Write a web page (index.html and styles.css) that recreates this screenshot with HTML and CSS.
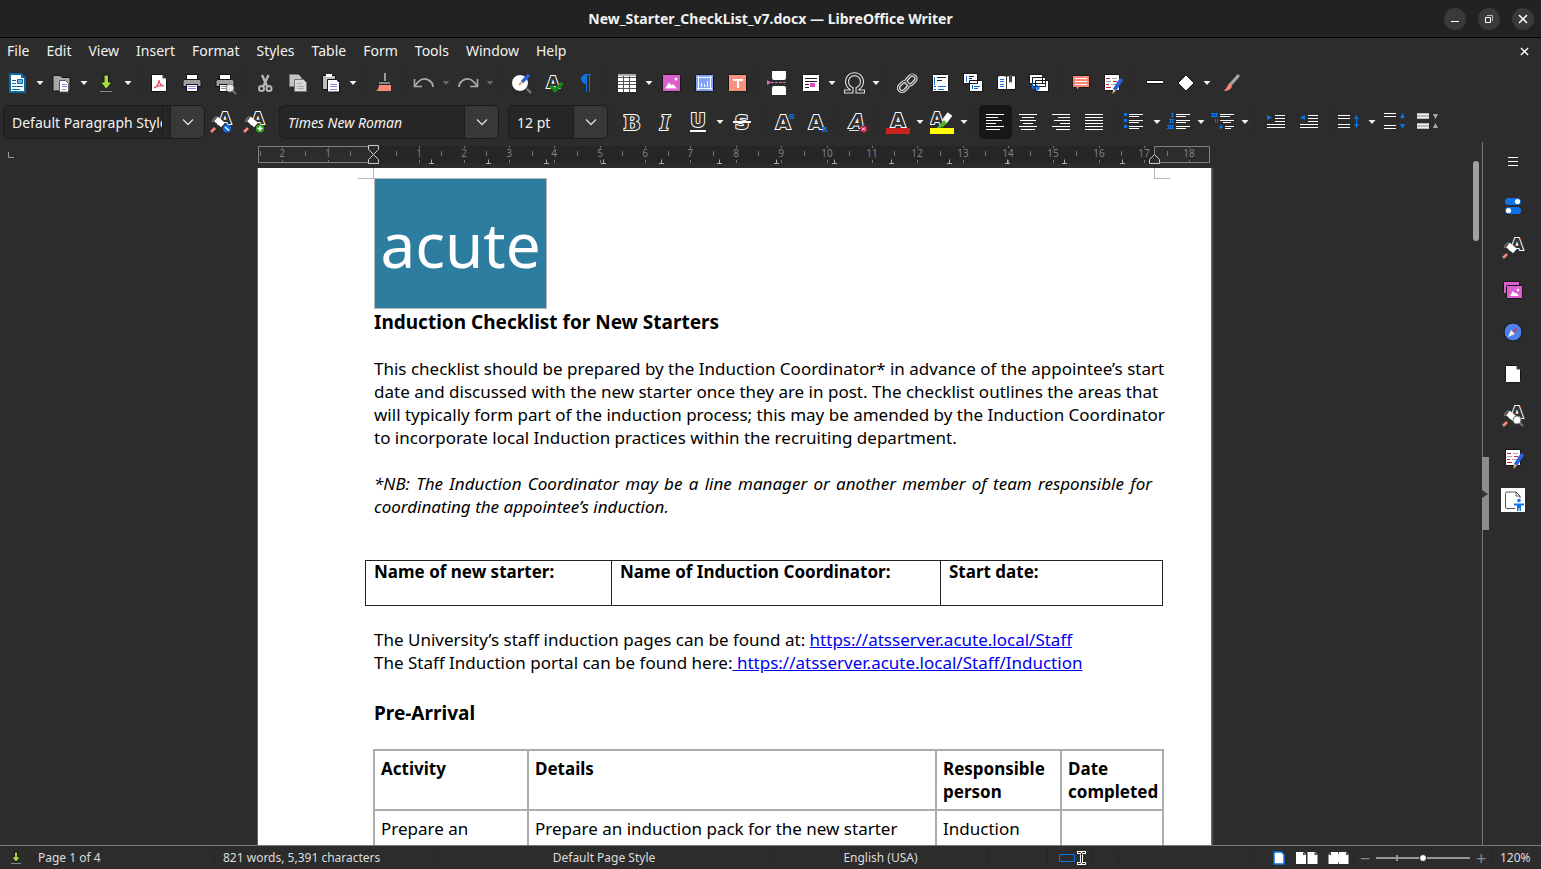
FILE: index.html
```html
<!DOCTYPE html>
<html lang="en">
<head>
<meta charset="utf-8">
<title>New_Starter_CheckList_v7.docx — LibreOffice Writer</title>
<link rel="stylesheet" href="styles.css">
</head>
<body>
<svg class="sprite" aria-hidden="true">
  <symbol id="new" viewBox="0 0 24 24"><path d="M4 3h11l4 4v14H4z" fill="#fff" stroke="#0b69a3" stroke-width="2"/><path d="M15 2v5h5z" fill="#0b69a3"/><path d="M6 9.500h4M6 12.500h4M6 15.500h11M6 18.500h8" stroke="#0b69a3"/><path d="M11.500 8.500h5v4h-5z" fill="#6bb4e8" stroke="#0b69a3"/></symbol>
  <symbol id="open" viewBox="0 0 24 24"><path d="M3 20V5.500q0-1 1-1h6l2 2h7q1 0 1 1V20z" fill="#a8a8a8" stroke="#111"/><path d="M9.500 9.500h6l3 3v8.500h-9z" fill="#fff" stroke="#555"/><path d="M12 13.500h5M12 15.500h5M12 18.500h4" stroke="#8b87e0"/></symbol>
  <symbol id="save" viewBox="0 0 24 24"><path d="M10 4h4.500v7h3.500l-5.800 7.500L6.500 11H10z" fill="#a4dc3c" stroke="#141414"/><path d="M6 20.500h12" stroke="#888"/></symbol>
  <symbol id="pdf" viewBox="0 0 24 24"><path d="M4.500 3.500h11l4 4v13h-15z" fill="#fff" stroke="#111"/><path d="M15.500 3.500v4h4z" fill="#444"/><path d="M7 17c3-1 5-5 5-8 0 3 2 6 5 6-3-1-7 0-10 2z" fill="none" stroke="#e0435a" stroke-width="1.200"/></symbol>
  <symbol id="print" viewBox="0 0 24 24"><path d="M6.500 3.500h11v5h-11z" fill="#fff" stroke="#111"/><path d="M5 8.500h14q2 0 2 2v5H3v-5q0-2 2-2z" fill="#a0a0a0" stroke="#151515"/><path d="M6.500 13.500h11v7h-11z" fill="#fff" stroke="#111"/><path d="M8 15.500h8M8 17.500h8" stroke="#8b87e0"/></symbol>
  <symbol id="preview" viewBox="0 0 24 24"><use href="#print"/><circle cx="17" cy="17" r="4" fill="#e8e8e8" stroke="#777"/><path d="M20 20l3 3" stroke="#777" stroke-width="2"/></symbol>
  <symbol id="cut" viewBox="0 0 24 24"><path d="M9 4l5 11M15.500 4l-5 11" stroke="#b5b5b5" stroke-width="2.400"/><g fill="none" stroke="#b5b5b5" stroke-width="2"><circle cx="8.500" cy="17.500" r="2.500"/><circle cx="16" cy="17.500" r="2.500"/></g></symbol>
  <symbol id="copy" viewBox="0 0 24 24"><path d="M3.500 3.500h9l3 3v9h-12z" fill="#c4c4c4" stroke="#777"/><path d="M8.500 8.500h9l3 3v9h-12z" fill="#d8d8d8" stroke="#777"/><path d="M11 12.500h5M11 15.500h7M11 17.500h7" stroke="#aaa"/></symbol>
  <symbol id="paste" viewBox="0 0 24 24"><path d="M3.500 4.500h13v14h-13z" fill="#bdbdbd" stroke="#151515"/><path d="M7 3h6v3H7z" fill="#fff"/><path d="M8.500 8.500h9l3 3v9.500h-12z" fill="#fff" stroke="#151515"/><path d="M11 13.500h7M11 15.500h7M11 18.500h7" stroke="#8b87e0"/></symbol>
  <symbol id="clone" viewBox="0 0 24 24"><path d="M13 2v8" stroke="#999" stroke-width="2"/><path d="M6.500 10.500h12v3h-12z" fill="#8a8a8a" stroke="#222"/><path d="M7 14h12v6H4q3-2 3-6z" fill="#f98a78"/></symbol>
  <symbol id="undo" viewBox="0 0 24 24"><path d="M2.500 8v7.500H10" fill="none" stroke="#aaa" stroke-width="1.600"/><path d="M3 15q7-11 15-5 3 2 3 6" fill="none" stroke="#aaa" stroke-width="1.800"/></symbol>
  <symbol id="redo" viewBox="0 0 24 24"><path d="M21.500 8v7.500H14" fill="none" stroke="#aaa" stroke-width="1.600"/><path d="M21 15q-7-11-15-5-3 2-3 6" fill="none" stroke="#aaa" stroke-width="1.800"/></symbol>
  <symbol id="find" viewBox="0 0 24 24"><path d="M17 17l5 5" stroke="#777" stroke-width="2.400"/><circle cx="11" cy="12" r="8.500" fill="#fff" stroke="#1a1a1a"/><path d="M20 4l-7 7" stroke="#2a5fe0" stroke-width="3.400"/><path d="M13 11l-3 3" stroke="#efa36b" stroke-width="2"/></symbol>
  <symbol id="spell" viewBox="0 0 24 24"><text x="11" y="17" class="glyph glyph-sm">A</text><path d="M9 15l4 4.500 7.500-7.500" fill="none" stroke="#138a1e" stroke-width="3.400"/></symbol>
  <symbol id="pilcrow" viewBox="0 0 24 24"><path d="M16 3.500h-5a4.500 4.500 0 0 0 0 9h.5V21M14.500 3.500V21" fill="none" stroke="#0b73e6"/><path d="M12 3.500h-1a4.500 4.500 0 0 0 0 9h1z" fill="#0b73e6"/></symbol>
  <symbol id="table" viewBox="0 0 24 24"><path d="M3 3h18v18H3z" fill="#fff"/><path d="M3 3.500h18M3 6.500h18M3 10.500h18M3 13.500h18M3 17.500h18M8.500 3v18M14.500 3v18" stroke="#555"/><path d="M3 3h18v2H3z" fill="#aaa"/></symbol>
  <symbol id="image" viewBox="0 0 24 24"><rect x="3.500" y="3.500" width="18" height="17" rx="1" fill="#dc5fce" stroke="#171717"/><path d="M6 17.500l4-6 2.500 3 1.500-1.500 4 4.500z" fill="#fff"/><circle cx="17" cy="8" r="1.500" fill="#fff"/></symbol>
  <symbol id="chart" viewBox="0 0 24 24"><rect x="3.500" y="3.500" width="18" height="17" rx="1" fill="#82a3fa" stroke="#171717"/><path d="M6.500 5v14M5 17.500h15M18.500 5v14M5 6.500h15M9.500 16v-4M12.500 16v-3M15.500 16v-6" stroke="#fff"/></symbol>
  <symbol id="textbox" viewBox="0 0 24 24"><rect x="3.500" y="3.500" width="18" height="17" rx="1" fill="#fb917e" stroke="#171717"/><path d="M8 9h10M13 9v8" stroke="#fff" stroke-width="2"/></symbol>
  <symbol id="pagebreak" viewBox="0 0 24 24"><path d="M7 0h14v7q0 2-2 2H9q-2 0-2-2zM7 24h14v-7q0-2-2-2H9q-2 0-2 2z" fill="#fff"/><path d="M6 11.500h16" stroke="#e066c8" stroke-dasharray="3 1"/><path d="M2 9l4 2.500L2 14z" fill="#e066c8"/></symbol>
  <symbol id="field" viewBox="0 0 24 24"><rect x="4.500" y="3.500" width="17" height="17" rx="1" fill="#fff" stroke="#171717"/><path d="M7 7.500h12M7 10.500h12M7 13.500h4M7 16.500h4" stroke="#222"/><path d="M12 12h5v4h-5z" fill="#d84bc5"/></symbol>
  <symbol id="omega" viewBox="0 0 24 24"><path d="M2 20.500h7.500v-3a7.500 7.500 0 1 1 6 0v3H23" fill="none" stroke="#ddd" stroke-width="4"/><path d="M3 20.500h6.500v-3a7.500 7.500 0 1 1 6 0v3H22" fill="none" stroke="#2c2c2c" stroke-width="1.800"/></symbol>
  <symbol id="link" viewBox="0 0 24 24"><g fill="none" stroke="#ddd" stroke-width="3.400"><rect x="10.500" y="5.500" width="11" height="7" rx="3.500" transform="rotate(-45 16 9)"/><rect x="3" y="12" width="11" height="7" rx="3.500" transform="rotate(-45 8.500 15.500)"/></g><g fill="none" stroke="#444" stroke-width="1"><rect x="10.500" y="5.500" width="11" height="7" rx="3.500" transform="rotate(-45 16 9)"/><rect x="3" y="12" width="11" height="7" rx="3.500" transform="rotate(-45 8.500 15.500)"/></g></symbol>
  <symbol id="footnote" viewBox="0 0 24 24"><rect x="4.500" y="3.500" width="16" height="17" rx="1" fill="#fff" stroke="#171717"/><path d="M9 6.500h9M9 9.500h5" stroke="#222"/><path d="M6.500 6v8M6 15.500h2M10 15.500h8M6 18.500h2M10 18.500h6" stroke="#0b6fe0"/></symbol>
  <symbol id="endnote" viewBox="0 0 24 24"><path d="M2.500 2.500h14v10h-14zM8.500 9.500h13v11h-13z" fill="#fff" stroke="#171717"/><path d="M8 5.500h5M8 7.500h3" stroke="#222"/><path d="M5.500 5v6M11.500 14v4M13 15.500h6M13 17.500h4" stroke="#0b6fe0"/></symbol>
  <symbol id="bookmark" viewBox="0 0 24 24"><path d="M3.500 5q4-1 9 0 5-1 9 0v13.500h-18z" fill="#fff" stroke="#171717"/><path d="M12.500 5v14" stroke="#333"/><path d="M6 8.500h4M6 10.500h4M6 13.500h4M6 15.500h4" stroke="#0b6fe0"/><path d="M15 4h3v8l-1.500-1.500L15 12z" fill="#444"/></symbol>
  <symbol id="crossref" viewBox="0 0 24 24"><path d="M2.500 3.500h13v9h-13zM5.500 6.500h13v9h-13zM8.500 9.500h13v11h-13z" fill="#fff" stroke="#171717"/><path d="M12 12.500h7M12 15.500h5" stroke="#222"/><path d="M5.500 12v5h6M9 14l3 3-3 3" fill="none" stroke="#0b6fe0" stroke-width="1.500"/></symbol>
  <symbol id="comment" viewBox="0 0 24 24"><path d="M5.500 4.500h17v12H12l-2.500 4v-4h-4z" fill="#fb8672" stroke="#1b1b1b"/><path d="M8 7.500h12M8 10.500h12M8 13.500h12" stroke="#fff"/></symbol>
  <symbol id="track" viewBox="0 0 24 24"><path d="M4.500 3.500h15v16h-15z" fill="#fff" stroke="#171717"/><path d="M6 7.500h4M13 10.500h4M6 13.500h3M6 16.500h5" stroke="#c62036"/><path d="M12 7.500h5M6 10.500h5M11 13.500h6" stroke="#aaa"/><path d="M21.500 8l-7 11" stroke="#2a62e0" stroke-width="4"/><path d="M16 19.500l-3.500 3.500.5-5z" fill="#efb07a"/></symbol>
  <symbol id="line" viewBox="0 0 24 24"><path d="M6 11h17" stroke="#111" stroke-width="4"/><path d="M7 11h16" stroke="#fff" stroke-width="2"/></symbol>
  <symbol id="shape" viewBox="0 0 24 24"><path d="M13 4l8 8-8 8-8-8z" fill="#fff" stroke="#151515"/></symbol>
  <symbol id="draw" viewBox="0 0 24 24"><path d="M21 5l-7 8" stroke="#a5a5a5" stroke-width="3.400" stroke-linecap="round"/><path d="M12 12l3 3q-1 5-8.500 5 3-2 5.500-8z" fill="#fb8672"/></symbol>
  <symbol id="style" viewBox="0 0 24 24"><text x="16" y="14" class="glyph glyph-sm">A</text><path d="M3.500 12q1-5 5-5" fill="none" stroke="#777" stroke-width="1.500"/><path d="M7 9l7 6" stroke="#fff" stroke-width="6"/><path d="M6 18l-4 4" stroke="#f58a78" stroke-width="2.600"/></symbol>
  <symbol id="style-update" viewBox="0 0 24 24"><use href="#style"/><circle cx="18" cy="18.500" r="4" fill="#0b6fe0"/><path d="M16 17l4 3.500" stroke="#fff" stroke-width="1.500"/></symbol>
  <symbol id="style-new" viewBox="0 0 24 24"><use href="#style"/><circle cx="18" cy="18.500" r="4" fill="#36a420"/><path d="M15.500 18.500h5M18 16v5" stroke="#fff" stroke-width="1.300"/></symbol>
  <symbol id="style-find" viewBox="0 0 24 24"><use href="#style"/><path d="M18 18l4 4" stroke="#777" stroke-width="2"/><circle cx="16" cy="16" r="4" fill="#fff" stroke="#777"/></symbol>
  <symbol id="bold" viewBox="0 0 24 24"><text x="12" y="20" class="glyph glyph-serif">B</text></symbol>
  <symbol id="italic" viewBox="0 0 24 24"><text x="12" y="20" class="glyph glyph-serif slant">I</text></symbol>
  <symbol id="underline" viewBox="0 0 24 24"><text x="12" y="17" class="glyph glyph-mid">U</text><path d="M4 21h16" stroke="#fff" stroke-width="2"/></symbol>
  <symbol id="strike" viewBox="0 0 24 24"><text x="12" y="19" class="glyph">S</text><path d="M3 12h18" stroke="#fff" stroke-width="2"/></symbol>
  <symbol id="super" viewBox="0 0 24 24"><text x="12" y="19" class="glyph glyph-mid">A</text><text x="21" y="9" class="mark">B</text></symbol>
  <symbol id="sub" viewBox="0 0 24 24"><text x="12" y="19" class="glyph glyph-mid">A</text><text x="21" y="22" class="mark">B</text></symbol>
  <symbol id="clear" viewBox="0 0 24 24"><text x="12" y="18" class="glyph glyph-mid slant">A</text><path d="M4 20.500h10" stroke="#ddd"/><circle cx="18.500" cy="19" r="3.500" fill="#cf2440"/><path d="M17 17.500l3 3M20 17.500l-3 3" stroke="#fff"/></symbol>
  <symbol id="color" viewBox="0 0 24 24"><text x="12" y="17" class="glyph glyph-mid">A</text><path d="M0 18h24v6H0z" fill="#c9211e"/></symbol>
  <symbol id="highlight" viewBox="0 0 24 24"><text x="7" y="14" class="glyph glyph-sm">A</text><path d="M20 4l-6 8" stroke="#fff" stroke-width="6"/><path d="M14 10l3 3-4 4-7 2z" fill="#55b52c"/><path d="M0 18h24v6H0z" fill="#ff0"/></symbol>
  <symbol id="left" viewBox="0 0 24 24"><path d="M3 4.500h18M3 7.500h12M3 10.500h16M3 13.500h10M3 16.500h18M3 19.500h14" stroke="#fff"/></symbol>
  <symbol id="center" viewBox="0 0 24 24"><path d="M3 4.500h18M6 7.500h12M4 10.500h16M7 13.500h10M3 16.500h18M5 19.500h14" stroke="#fff"/></symbol>
  <symbol id="right" viewBox="0 0 24 24"><path d="M3 4.500h18M9 7.500h12M5 10.500h16M11 13.500h10M3 16.500h18M7 19.500h14" stroke="#fff"/></symbol>
  <symbol id="justify" viewBox="0 0 24 24"><path d="M3 4.500h18M3 7.500h18M3 10.500h18M3 13.500h18M3 16.500h18M3 19.500h18" stroke="#fff"/></symbol>
  <symbol id="bullets" viewBox="0 0 24 24"><path d="M6 4.500h14M6 6.500h10M6 10.500h14M6 12.500h10M6 16.500h14M6 18.500h10" stroke="#fff"/><path d="M1 3h3v3H1zM1 9h3v3H1zM1 15h3v3H1z" fill="#0b73e6"/></symbol>
  <symbol id="numbers" viewBox="0 0 24 24"><path d="M9 4.500h14M9 6.500h10M9 10.500h14M9 12.500h10M9 16.500h14M9 18.500h10" stroke="#fff"/><path d="M4 3.500h3M4 6.500h3M5.500 3v4M2 9.500h5M2 12.500h5M3.500 9v4M5.500 9v4M0 15.500h7M0 18.500h7M1.500 15v4M3.500 15v4M5.500 15v4" stroke="#0b73e6"/></symbol>
  <symbol id="outline" viewBox="0 0 24 24"><path d="M9 4.500h14M9 6.500h10M9 10.500h14M12 12.500h8M14 16.500h9M14 18.500h6" stroke="#fff"/><path d="M0 3.500h7M0 6.500h7M1.500 3v4M3.500 3v4M5.500 3v4M4.500 9v3.500M6.500 9v3.500" stroke="#0b73e6"/><circle cx="10" cy="17" r="1.700" fill="#0b73e6"/></symbol>
  <symbol id="indent" viewBox="0 0 24 24"><path d="M11 5.500h10M11 8.500h10M11 11.500h10M3 14.500h18M3 17.500h18" stroke="#fff"/><path d="M3 5v5l5-2.500z" fill="#0b73e6"/></symbol>
  <symbol id="outdent" viewBox="0 0 24 24"><path d="M11 5.500h10M11 8.500h10M11 11.500h10M3 14.500h18M3 17.500h18" stroke="#fff"/><path d="M8 5v5L3 7.500z" fill="#0b73e6"/></symbol>
  <symbol id="spacing" viewBox="0 0 24 24"><path d="M0 5.500h12M0 8.500h12M0 14.500h12M0 17.500h12" stroke="#fff"/><path d="M18.500 7v9" stroke="#0b73e6"/><path d="M16 9l2.500-4L21 9zM16 14l2.500 4 2.500-4z" fill="#0b73e6"/></symbol>
  <symbol id="para-inc" viewBox="0 0 24 24"><path d="M2 3.500h12M2 6.500h12M2 15.500h12M2 18.500h12" stroke="#fff"/><path d="M18 8l2.500-5L23 8zM18 14l2.500 5 2.500-5z" fill="#0b73e6"/></symbol>
  <symbol id="para-dec" viewBox="0 0 24 24"><path d="M2 3h12v6H2zM2 13h12v6H2z" fill="#bbb"/><path d="M2 4.500h12M2 7.500h12M2 14.500h12M2 17.500h12" stroke="#eee"/><path d="M18 4h5l-2.500 5zM18 18h5l-2.500-5z" fill="#aaa"/></symbol>
  <symbol id="drop" viewBox="0 0 10 6"><path d="M1.500 1h7L5 5z" fill="currentColor"/></symbol>
  <symbol id="chev" viewBox="0 0 12 8"><path d="M1 1.500l5 5 5-5" fill="none" stroke="#ddd" stroke-width="1.300"/></symbol>
  <symbol id="burger" viewBox="0 0 24 24"><path d="M7 7.500h10M7 11.500h10M7 15.500h10" stroke="#fff"/></symbol>
  <symbol id="props" viewBox="0 0 24 24"><rect x="4" y="4" width="16" height="7" rx="3.500" fill="#0b73e6"/><rect x="4" y="13" width="16" height="7" rx="3.500" fill="#0b73e6"/><circle cx="16.500" cy="7.500" r="2.600" fill="#fff"/><circle cx="7.500" cy="16.500" r="2.600" fill="#fff"/></symbol>
  <symbol id="gallery" viewBox="0 0 24 24"><rect x="2.500" y="3.500" width="16" height="12" rx="1" fill="#dc5fce" stroke="#171717"/><rect x="5.500" y="7.500" width="16" height="13" rx="1" fill="#dc5fce" stroke="#171717"/><path d="M9 18l3-5 2 2.500 1-1 3 3.500z" fill="#fff"/><circle cx="17" cy="12" r="1.200" fill="#fff"/></symbol>
  <symbol id="navigator" viewBox="0 0 24 24"><circle cx="12" cy="12" r="9" fill="#4f80ea" stroke="#151515"/><path d="M17 7l-3.500 6-2-2z" fill="#d43b4b"/><path d="M7 17l3-7 4 4z" fill="#eee"/></symbol>
  <symbol id="page" viewBox="0 0 24 24"><path d="M5 3.500h10.500l4 4v12q0 1-1 1h-13q-1 0-1-1v-15z" fill="#fff" stroke="#161616"/><path d="M15.500 3.500v4h4z" fill="#444"/></symbol>
  <symbol id="a11y" viewBox="0 0 24 24"><path d="M14 20.500H6q-1.500 0-1.500-1.500V5.500Q4.500 4 6 4h9l4 4v2M15 4v4h4" fill="none" stroke="#555"/><circle cx="18" cy="12.500" r="1.800" fill="#0b78e6"/><path d="M13 15.500h10v2h-3v5.500h-1.500v-3h-1v3H16v-5.500h-3z" fill="#0b78e6"/></symbol>
</svg>

<header class="titlebar">
  <h1 class="window-title">New_Starter_CheckList_v7.docx — LibreOffice Writer</h1>
  <div class="window-controls">
    <button class="win-btn" aria-label="Minimize"><svg viewBox="0 0 22 22"><path d="M7 13.500h8" stroke="#fff"/></svg></button>
    <button class="win-btn" aria-label="Restore"><svg viewBox="0 0 22 22"><path d="M7.500 9.500h5v5h-5z" fill="none" stroke="#fff"/><path d="M9 7.500h5.500V13" fill="none" stroke="#bbb"/></svg></button>
    <button class="win-btn" aria-label="Close"><svg viewBox="0 0 22 22"><path d="M7 7l8 8M15 7l-8 8" stroke="#fff" stroke-width="1.500"/></svg></button>
  </div>
</header>

<nav class="menubar" aria-label="Menu">
  <button>File</button><button>Edit</button><button>View</button><button>Insert</button><button>Format</button><button>Styles</button><button>Table</button><button>Form</button><button>Tools</button><button>Window</button><button>Help</button>
  <button class="close-doc" aria-label="Close document"><svg viewBox="0 0 10 10"><path d="M1 1l8 8M9 1L1 9" stroke="#fff" stroke-width="1.500"/></svg></button>
</nav>

<div class="toolbar standard" role="toolbar" aria-label="Standard">
  <button class="tool" aria-label="New"><svg><use href="#new"/></svg></button><button class="drop" aria-label="New options"><svg><use href="#drop"/></svg></button>
  <button class="tool" aria-label="Open"><svg><use href="#open"/></svg></button><button class="drop" aria-label="Open options"><svg><use href="#drop"/></svg></button>
  <button class="tool" aria-label="Save"><svg><use href="#save"/></svg></button><button class="drop" aria-label="Save options"><svg><use href="#drop"/></svg></button>
  <span class="sep"></span>
  <button class="tool" aria-label="Export as PDF"><svg><use href="#pdf"/></svg></button>
  <button class="tool" aria-label="Print"><svg><use href="#print"/></svg></button>
  <button class="tool" aria-label="Print preview"><svg><use href="#preview"/></svg></button>
  <span class="sep"></span>
  <button class="tool" aria-label="Cut"><svg><use href="#cut"/></svg></button>
  <button class="tool" aria-label="Copy"><svg><use href="#copy"/></svg></button>
  <button class="tool" aria-label="Paste"><svg><use href="#paste"/></svg></button><button class="drop" aria-label="Paste options"><svg><use href="#drop"/></svg></button>
  <span class="sep"></span>
  <button class="tool" aria-label="Clone formatting"><svg><use href="#clone"/></svg></button>
  <span class="sep"></span>
  <button class="tool" aria-label="Undo"><svg><use href="#undo"/></svg></button><button class="drop dim" aria-label="Undo list"><svg><use href="#drop"/></svg></button>
  <button class="tool" aria-label="Redo"><svg><use href="#redo"/></svg></button><button class="drop dim" aria-label="Redo list"><svg><use href="#drop"/></svg></button>
  <span class="sep"></span>
  <button class="tool" aria-label="Find and replace"><svg><use href="#find"/></svg></button>
  <button class="tool" aria-label="Spelling"><svg><use href="#spell"/></svg></button>
  <button class="tool" aria-label="Formatting marks"><svg><use href="#pilcrow"/></svg></button>
  <span class="sep"></span>
  <button class="tool" aria-label="Insert table"><svg><use href="#table"/></svg></button><button class="drop" aria-label="Table options"><svg><use href="#drop"/></svg></button>
  <button class="tool" aria-label="Insert image"><svg><use href="#image"/></svg></button>
  <button class="tool" aria-label="Insert chart"><svg><use href="#chart"/></svg></button>
  <button class="tool" aria-label="Insert text box"><svg><use href="#textbox"/></svg></button>
  <span class="sep"></span>
  <button class="tool" aria-label="Insert page break"><svg><use href="#pagebreak"/></svg></button>
  <button class="tool" aria-label="Insert field"><svg><use href="#field"/></svg></button><button class="drop" aria-label="Field options"><svg><use href="#drop"/></svg></button>
  <button class="tool" aria-label="Special character"><svg><use href="#omega"/></svg></button><button class="drop" aria-label="Character options"><svg><use href="#drop"/></svg></button>
  <span class="sep"></span>
  <button class="tool" aria-label="Insert hyperlink"><svg><use href="#link"/></svg></button>
  <button class="tool" aria-label="Insert footnote"><svg><use href="#footnote"/></svg></button>
  <button class="tool" aria-label="Insert endnote"><svg><use href="#endnote"/></svg></button>
  <button class="tool" aria-label="Insert bookmark"><svg><use href="#bookmark"/></svg></button>
  <button class="tool" aria-label="Insert cross-reference"><svg><use href="#crossref"/></svg></button>
  <span class="sep"></span>
  <button class="tool" aria-label="Insert comment"><svg><use href="#comment"/></svg></button>
  <button class="tool" aria-label="Track changes"><svg><use href="#track"/></svg></button>
  <span class="sep"></span>
  <button class="tool" aria-label="Insert line"><svg><use href="#line"/></svg></button>
  <button class="tool" aria-label="Basic shapes"><svg><use href="#shape"/></svg></button><button class="drop" aria-label="Shape options"><svg><use href="#drop"/></svg></button>
  <button class="tool" aria-label="Draw functions"><svg><use href="#draw"/></svg></button>
</div>

<div class="toolbar formatting" role="toolbar" aria-label="Formatting">
  <div class="combo combo-wide"><input aria-label="Paragraph style" value="Default Paragraph Style"><span class="combo-rule"></span><button aria-label="Show styles"><svg><use href="#chev"/></svg></button></div>
  <button class="tool" aria-label="Update style"><svg><use href="#style-update"/></svg></button>
  <button class="tool" aria-label="New style"><svg><use href="#style-new"/></svg></button>
  <span class="sep"></span>
  <div class="combo combo-font"><input class="slant" aria-label="Font name" value="Times New Roman"><button aria-label="Show fonts"><svg><use href="#chev"/></svg></button></div>
  <div class="combo combo-size"><input aria-label="Font size" value="12 pt"><button aria-label="Show sizes"><svg><use href="#chev"/></svg></button></div>
  <span class="sep"></span>
  <button class="tool" aria-label="Bold"><svg><use href="#bold"/></svg></button>
  <button class="tool" aria-label="Italic"><svg><use href="#italic"/></svg></button>
  <button class="tool" aria-label="Underline"><svg><use href="#underline"/></svg></button><button class="drop" aria-label="Underline options"><svg><use href="#drop"/></svg></button>
  <button class="tool" aria-label="Strikethrough"><svg><use href="#strike"/></svg></button>
  <span class="sep"></span>
  <button class="tool" aria-label="Superscript"><svg><use href="#super"/></svg></button>
  <button class="tool" aria-label="Subscript"><svg><use href="#sub"/></svg></button>
  <span class="sep"></span>
  <button class="tool" aria-label="Clear formatting"><svg><use href="#clear"/></svg></button>
  <span class="sep"></span>
  <button class="tool" aria-label="Font color"><svg><use href="#color"/></svg></button><button class="drop" aria-label="Font color options"><svg><use href="#drop"/></svg></button>
  <button class="tool" aria-label="Highlighting"><svg><use href="#highlight"/></svg></button><button class="drop" aria-label="Highlighting options"><svg><use href="#drop"/></svg></button>
  <span class="sep"></span>
  <button class="tool active" aria-label="Align left" aria-pressed="true"><svg><use href="#left"/></svg></button>
  <button class="tool" aria-label="Align center"><svg><use href="#center"/></svg></button>
  <button class="tool" aria-label="Align right"><svg><use href="#right"/></svg></button>
  <button class="tool" aria-label="Justify"><svg><use href="#justify"/></svg></button>
  <span class="sep"></span>
  <button class="tool" aria-label="Bullets"><svg><use href="#bullets"/></svg></button><button class="drop" aria-label="Bullet options"><svg><use href="#drop"/></svg></button>
  <button class="tool" aria-label="Numbering"><svg><use href="#numbers"/></svg></button><button class="drop" aria-label="Numbering options"><svg><use href="#drop"/></svg></button>
  <button class="tool" aria-label="Outline format"><svg><use href="#outline"/></svg></button><button class="drop" aria-label="Outline options"><svg><use href="#drop"/></svg></button>
  <span class="sep"></span>
  <button class="tool" aria-label="Increase indent"><svg><use href="#indent"/></svg></button>
  <button class="tool" aria-label="Decrease indent"><svg><use href="#outdent"/></svg></button>
  <span class="sep"></span>
  <button class="tool" aria-label="Line spacing"><svg><use href="#spacing"/></svg></button><button class="drop" aria-label="Line spacing options"><svg><use href="#drop"/></svg></button>
  <button class="tool" aria-label="Increase paragraph spacing"><svg><use href="#para-inc"/></svg></button>
  <button class="tool" aria-label="Decrease paragraph spacing"><svg><use href="#para-dec"/></svg></button>
</div>

<main class="workspace">
  <div class="editor">
    <div class="ruler-row">
      <svg class="tab-type" viewBox="0 0 8 8"><path d="M1.500 1v5.500H7" fill="none" stroke="#999"/></svg>
      <svg class="ruler" width="953" height="26" viewBox="0 0 953 26" role="img" aria-label="Horizontal ruler">
        <path d="M115 4h781v17H115z" fill="#262626"/>
        <path d="M115.500 4.500H.5v16h115M896.500 4.500h55v16h-55z" fill="none" stroke="#808080"/>
        <path d="M24.500 4v2m0 12v3M70.500 4v2m0 12v3M161.500 4v2m0 12v3M206.500 4v2m0 12v3M251.500 4v2m0 12v3M296.500 4v2m0 12v3M342.500 4v2m0 12v3M387.500 4v2m0 12v3M432.500 4v2m0 12v3M478.500 4v2m0 12v3M523.500 4v2m0 12v3M569.500 4v2m0 12v3M614.500 4v2m0 12v3M659.500 4v2m0 12v3M705.500 4v2m0 12v3M750.500 4v2m0 12v3M795.500 4v2m0 12v3M841.500 4v2m0 12v3M886.500 4v2m0 12v3M931.500 4v2m0 12v3" stroke="#777"/>
        <path d="M2.500 9v5M47.500 9v5M92.500 9v5M138.500 9v5M183.500 9v5M228.500 9v5M274.500 9v5M319.500 9v5M364.500 9v5M410.500 9v5M455.500 9v5M500.500 9v5M546.500 9v5M591.500 9v5M636.500 9v5M682.500 9v5M727.500 9v5M772.500 9v5M818.500 9v5M863.500 9v5M909.500 9v5" stroke="#777"/>
        <path d="M171 21.500h5m-2.500-4v4M228 21.500h5m-2.500-4v4M286 21.500h5m-2.500-4v4M343 21.500h5m-2.500-4v4M401 21.500h5m-2.500-4v4M459 21.500h5m-2.500-4v4M516 21.500h5m-2.500-4v4M574 21.500h5m-2.500-4v4M631 21.500h5m-2.500-4v4M689 21.500h5m-2.500-4v4M747 21.500h5m-2.500-4v4M804 21.500h5m-2.500-4v4M862 21.500h5m-2.500-4v4" stroke="#aaa" fill="none"/>
        <g class="ruler-num"><text x="24" y="15">2</text><text x="70" y="15">1</text><text x="161" y="15">1</text><text x="206" y="15">2</text><text x="251" y="15">3</text><text x="296" y="15">4</text><text x="342" y="15">5</text><text x="387" y="15">6</text><text x="432" y="15">7</text><text x="478" y="15">8</text><text x="523" y="15">9</text><text x="569" y="15">10</text><text x="614" y="15">11</text><text x="659" y="15">12</text><text x="705" y="15">13</text><text x="750" y="15">14</text><text x="795" y="15">15</text><text x="841" y="15">16</text><text x="886" y="15">17</text><text x="931" y="15">18</text></g>
        <path d="M110.500 3.500h10v4l-5 5-5-5zM115.500 12.500l5 5v4h-10v-4zM896.500 12.500l5 5v4h-10v-4z" fill="#2b2b2b" stroke="#ccc"/>
      </svg>
    </div>
    <div class="viewport">
      <article class="page">
        <span class="crop crop-left"></span><span class="crop crop-right"></span>
        <div class="logo">acute</div>
        <h2 class="doc-heading">Induction Checklist for New Starters</h2>
        <p class="intro">This checklist should be prepared by the Induction Coordinator* in advance of the appointee’s start date and discussed with the new starter once they are in post. The checklist outlines the areas that will typically form part of the induction process; this may be amended by the Induction Coordinator to incorporate local Induction practices within the recruiting department.</p>
        <p class="note">*NB: The Induction Coordinator may be a line manager or another member of team responsible for coordinating the appointee’s induction.</p>
        <table class="names">
          <colgroup><col class="c-starter"><col class="c-coord"><col></colgroup>
          <tr><th>Name of new starter:</th><th>Name of Induction Coordinator:</th><th>Start date:</th></tr>
        </table>
        <p class="links">The University’s staff induction pages can be found at: <a href="https://atsserver.acute.local/Staff">https://atsserver.acute.local/Staff</a><br>The Staff Induction portal can be found here:<a href="https://atsserver.acute.local/Staff/Induction"> https://atsserver.acute.local/Staff/Induction</a></p>
        <h2 class="doc-heading section">Pre-Arrival</h2>
        <table class="tasks">
          <colgroup><col class="c-activity"><col><col class="c-person"><col class="c-date"></colgroup>
          <thead><tr><th>Activity</th><th>Details</th><th>Responsible person</th><th>Date completed</th></tr></thead>
          <tbody><tr><td>Prepare an</td><td>Prepare an induction pack for the new starter</td><td>Induction</td><td></td></tr></tbody>
        </table>
      </article>
    </div>
  </div>
  <div class="scrollbar"><div class="thumb"></div></div>
  <aside class="sidebar" aria-label="Sidebar">
    <button class="side" aria-label="Sidebar settings"><svg><use href="#burger"/></svg></button>
    <button class="side" aria-label="Properties"><svg><use href="#props"/></svg></button>
    <button class="side" aria-label="Styles"><svg><use href="#style"/></svg></button>
    <button class="side" aria-label="Gallery"><svg><use href="#gallery"/></svg></button>
    <button class="side" aria-label="Navigator"><svg><use href="#navigator"/></svg></button>
    <button class="side" aria-label="Page"><svg><use href="#page"/></svg></button>
    <button class="side" aria-label="Style inspector"><svg><use href="#style-find"/></svg></button>
    <button class="side" aria-label="Manage changes"><svg><use href="#track"/></svg></button>
    <button class="side lit" aria-label="Accessibility check"><svg><use href="#a11y"/></svg></button>
    <button class="grip" aria-label="Hide sidebar"><svg viewBox="0 0 6 8"><path d="M0 0v8l6-4z" fill="#333"/></svg></button>
  </aside>
</main>

<footer class="statusbar">
  <div class="cell s-save"><svg class="ico" viewBox="0 0 12 14"><path d="M4.500 1h3v5h3L6 11 1.500 6h3z" fill="#a4dc3c" stroke="#141414"/><path d="M1 12.500h10" stroke="#888"/></svg></div>
  <div class="cell s-page">Page 1 of 4</div>
  <div class="cell s-words">821 words, 5,391 characters</div>
  <div class="cell s-style">Default Page Style</div>
  <div class="cell s-lang">English (USA)</div>
  <div class="cell s-gap"></div>
  <div class="cell s-mode"><svg viewBox="0 0 28 16"><path d="M.5 4.500h15v7H.5z" fill="none" stroke="#0b73e6"/><path d="M18 2.500h3.500l1 1 1-1H27M22.500 3v10M18 13.500h3.500l1-1 1 1H27" fill="none" stroke="#fff" stroke-width="3"/><path d="M19 2.500h2.500l1 1 1-1H26M22.500 3v10M19 13.500h2.500l1-1 1 1H26" fill="none" stroke="#222"/></svg></div>
  <div class="cell s-sel"></div>
  <div class="cell s-sign"></div>
  <div class="cell s-views">
    <button aria-label="Single-page view"><svg width="12" height="14" viewBox="0 0 12 14"><path d="M1 1h7.500L11 3.500V13H1z" fill="#fff" stroke="#0b73e6" stroke-width="1.500"/></svg></button>
    <button aria-label="Multiple-page view"><svg width="23" height="14" viewBox="0 0 23 14"><path d="M1 1h7.500L11 3.500V13H1zM12.500 1H20l2.500 2.500V13h-10z" fill="#fff"/><path d="M8 1v3h3zM19.500 1v3h3z" fill="#444"/></svg></button>
    <button aria-label="Book view"><svg width="21" height="14" viewBox="0 0 21 14"><path d="M.5 3.500L3 1h15l2.500 2.500V13H.5z" fill="#fff"/><path d="M10.500 1v2M10.500 11v2" stroke="#777"/><path d="M3 1v3H0zM18 1v3h3z" fill="#444"/></svg></button>
  </div>
  <div class="cell s-zoom"><button aria-label="Zoom out">−</button><input type="range" min="0" max="100" value="50" aria-label="Zoom"><button aria-label="Zoom in">+</button></div>
  <div class="cell s-pct">120%</div>
</footer>
</body>
</html>
```

FILE: styles.css
```css
* { box-sizing: border-box; }

body {
  margin: 0;
  height: 100vh;
  display: flex;
  flex-direction: column;
  overflow: hidden;
  background: #2c2c2c;
  color: #f2f2f2;
  font: 14px/20px "Noto Sans", "Open Sans", sans-serif;
}

button {
  padding: 0;
  border: 0;
  background: none;
  color: inherit;
  font: inherit;
}

svg { display: block; }
.sprite { display: none; }

/* Outlined letters in toolbar icons */
.glyph {
  font: bold 20px "DejaVu Sans", sans-serif;
  text-anchor: middle;
  fill: #333;
  stroke: #fff;
  stroke-width: 2px;
  paint-order: stroke;
}
.glyph-mid { font-size: 19px; }
.glyph-sm { font-size: 16px; }
.glyph-serif { font-family: "DejaVu Serif", serif; }
.slant { font-style: italic; }
.mark {
  font: bold 8px "Liberation Sans", sans-serif;
  text-anchor: middle;
  fill: #0b73e6;
}

/* Title bar */
.titlebar {
  flex: none;
  height: 38px;
  display: grid;
  grid-template-columns: 1fr auto 1fr;
  align-items: center;
  background: #222;
  border-bottom: 1px solid #000;
}
.window-title {
  grid-column: 2;
  margin: 0;
  font-size: 14px;
  line-height: 20px;
  font-weight: 700;
}
.window-controls {
  display: flex;
  justify-content: flex-end;
  gap: 12px;
  padding-right: 7px;
}
.win-btn {
  width: 22px;
  height: 22px;
  border-radius: 50%;
  background: #3a3a3a;
}

/* Menu bar */
.menubar {
  flex: none;
  height: 26px;
  display: flex;
  align-items: center;
  gap: 17px;
  padding: 0 12px 0 7px;
}
.close-doc { margin-left: auto; }
.close-doc svg { width: 9px; height: 9px; }

/* Toolbars */
.toolbar {
  flex: none;
  display: flex;
  align-items: center;
  padding-left: 2px;
}
.standard { height: 38px; }
.formatting { height: 40px; padding-left: 3px; }
.tool {
  flex: none;
  width: 33px;
  height: 34px;
  display: grid;
  align-items: center;
  justify-items: start;
  padding-left: 4px;
  border-radius: 5px;
}
.tool svg, .side svg { width: 24px; height: 24px; }
.tool.active { background: #171717; }
.drop {
  flex: none;
  width: 11px;
  height: 34px;
  display: grid;
  align-items: center;
  justify-items: start;
}
.drop svg { width: 10px; height: 6px; }
.drop.dim { color: #666; }
.sep {
  flex: none;
  width: 1px;
  height: 30px;
  margin: 0 3px;
  background: #282828;
}
.standard .drop + .sep { margin-left: 5px; }
.formatting .sep { margin-right: 4px; }
.formatting .drop + .sep { margin-left: 4px; }

.combo {
  flex: none;
  height: 34px;
  display: flex;
  align-items: stretch;
  overflow: hidden;
  border: 1px solid #1c1c1c;
  border-radius: 6px;
  background: #262626;
}
.combo input {
  flex: 1;
  min-width: 0;
  padding: 0;
  margin-left: 8px;
  border: 0;
  outline: 0;
  background: none;
  color: #f2f2f2;
  font-family: inherit;
  font-size: 14px;
}
.combo button {
  flex: none;
  width: 34px;
  display: grid;
  place-items: center;
  background: #383838;
  border-left: 1px solid #1c1c1c;
}
.combo button svg { width: 12px; height: 8px; }
.combo-rule {
  flex: none;
  width: 8px;
  border-left: 1px solid #1c1c1c;
}
.combo-wide { width: 202px; }
.combo-font { width: 220px; margin-right: 9px; }
.combo-size { width: 100px; }

/* Workspace */
.workspace {
  flex: 1;
  min-height: 0;
  display: flex;
}
.editor {
  flex: 1;
  min-width: 0;
  display: flex;
  flex-direction: column;
}
.ruler-row {
  flex: none;
  display: grid;
  grid-template-columns: 1fr auto 1fr;
}
.tab-type {
  width: 8px;
  height: 8px;
  margin: 9px 0 0 7px;
}
.ruler-num {
  font: 10px "Noto Sans", sans-serif;
  text-anchor: middle;
  fill: #808080;
}
.viewport {
  flex: 1;
  min-height: 0;
  overflow: hidden;
  display: flex;
  justify-content: center;
}

/* Document page */
.page {
  position: relative;
  width: 100%;
  max-width: 953px;
  height: max-content;
  min-height: 100%;
  padding: 10px 56px 0 116px;
  background: #fff;
  color: #000;
  box-shadow: 0 0 0 1px #666, 2px 0 2px #555;
  font-size: 17px;
  line-height: 23px;
}
.crop {
  position: absolute;
  top: 0;
  width: 16px;
  height: 11px;
  border-bottom: 1px solid #b8b8b8;
}
.crop-left { left: 100px; border-right: 1px solid #b8b8b8; }
.crop-right { right: 41px; border-left: 1px solid #b8b8b8; }
.logo {
  width: 173px;
  height: 131px;
  display: grid;
  place-items: center;
  border: 1px solid #b8b8b8;
  background: #2d7da1;
  color: #fff;
  font: 62px/100px "Noto Sans", sans-serif;
}
.doc-heading {
  margin: 0;
  font-size: 19px;
  line-height: 26px;
  font-weight: 700;
}
.page p { margin: 0; }
.page .intro { margin: 22px -12px 0 0; }
.page .note {
  margin: 23px 3px 42px 0;
  font-style: italic;
  text-align: justify;
}
.page table {
  border-collapse: collapse;
  table-layout: fixed;
}
.page th, .page td {
  text-align: left;
  vertical-align: top;
}
.names { width: 798px; margin-left: -9px; }
.names th {
  height: 45px;
  padding: 0 8px;
  border: 1px solid #222;
  line-height: 22px;
}
.c-starter { width: 246px; }
.c-coord { width: 329px; }
.page .links { margin-top: 22px; }
.links a { color: #00e; }
.section { margin: 26px 0 23px; }
.tasks { width: 791px; margin-left: -1px; }
.tasks th, .tasks td {
  padding: 6px 4px 6px 6px;
  border: 2px solid #adadad;
}
.tasks th { height: 60px; }
.c-activity { width: 154px; }
.c-person { width: 125px; }
.c-date { width: 102px; }

/* Scroll bar and sidebar */
.scrollbar {
  flex: none;
  width: 13px;
  padding: 19px 3px 0 4px;
}
.thumb {
  height: 80px;
  border-radius: 3px;
  background: #a0a0a0;
}
.sidebar {
  position: relative;
  flex: none;
  width: 59px;
  padding: 0 0 0 2px;
  border-left: 1px solid #777;
  display: flex;
  flex-direction: column;
  align-items: center;
}
.side {
  width: 24px;
  height: 24px;
  margin-bottom: 18px;
}
.side:first-child { margin: 8px 0 20px; }
.lit { background: #fff; }
.grip {
  position: absolute;
  left: -1px;
  top: 315px;
  width: 7px;
  height: 73px;
  background: #8c8c8c;
}
.grip svg { width: 6px; height: 8px; }

/* Status bar */
.statusbar {
  flex: none;
  height: 24px;
  display: flex;
  align-items: center;
  border-top: 1px solid #777;
  font-size: 12px;
  line-height: 16px;
  color: #ddd;
}
.cell {
  flex: none;
  height: 18px;
  display: flex;
  align-items: center;
  padding: 0 8px;
  border-right: 1px solid #262626;
}
.s-save { width: 30px; padding: 0 0 0 10px; }
.ico { width: 12px; height: 14px; }
.s-page { width: 185px; }
.s-words { width: 220px; }
.s-style { flex: 1; justify-content: center; }
.s-lang { width: 214px; justify-content: center; }
.s-gap { width: 60px; }
.s-mode { width: 44px; padding: 0 0 0 11px; }
.s-mode svg { width: 28px; height: 16px; }
.s-sel { width: 27px; }
.s-sign { width: 135px; }
.s-views { width: 100px; gap: 10px; padding: 0 0 0 19px; }
.s-zoom { width: 138px; padding: 0 0 0 6px; gap: 6px; }
.s-zoom button {
  width: 10px;
  color: #888;
  font-size: 18px;
  line-height: 16px;
}
.s-zoom input {
  appearance: none;
  width: 94px;
  height: 10px;
  margin: 0;
  background: linear-gradient(#999, #999) 0 50% / 100% 2px no-repeat, linear-gradient(#999, #999) 20px 50% / 2px 6px no-repeat;
}
.s-zoom input::-webkit-slider-thumb {
  appearance: none;
  width: 8px;
  height: 8px;
  border: 1px solid #222;
  border-radius: 50%;
  background: #fff;
}
.s-pct { width: 49px; border: 0; }
```
